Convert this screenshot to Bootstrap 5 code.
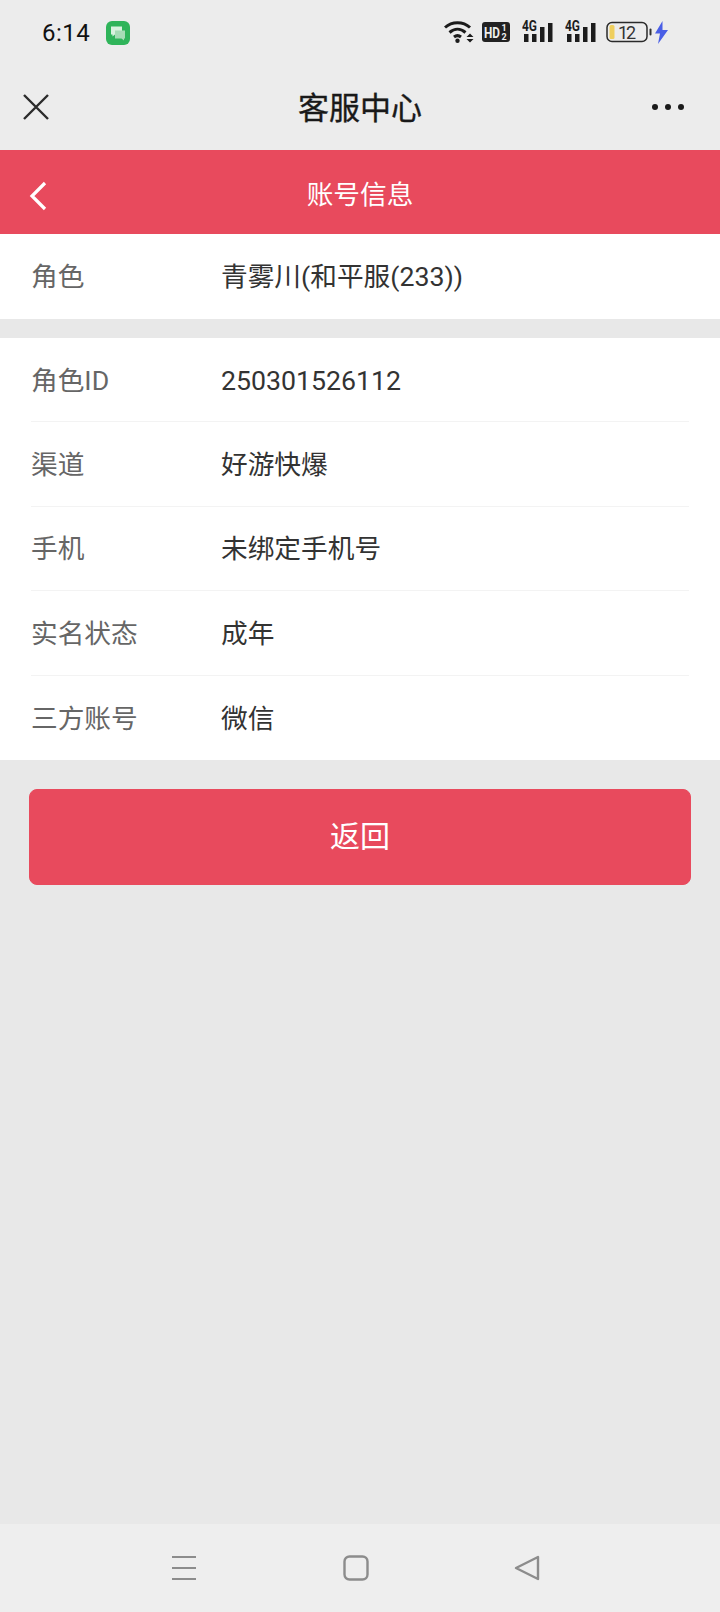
<!DOCTYPE html>
<html lang="zh-CN">
<head>
    <meta charset="UTF-8">
    <meta name="viewport" content="width=device-width, initial-scale=1.0">
    <title>客服中心</title>
    <link rel="stylesheet" href="https://cdn.jsdelivr.net/npm/bootstrap@5.3.3/dist/css/bootstrap.min.css">
    <style>
        html, body { height: 100%; }
        body {
            width: 720px;
            height: 1612px;
            overflow: hidden;
            background-color: #e8e8e8;
            font-family: Roboto, "Noto Sans CJK SC", sans-serif;
        }
        .phone-status { height: 62px; background-color: #ececec; padding: 3px 51px 0 42px; }
        .status-time { font-size: 24px; color: #111; line-height: 1; width: 64px; letter-spacing: .5px; }
        .status-icons { gap: 8px; margin-top: -2px; }
        .status-batt { margin-left: 2px; }
        .web-top { height: 88px; background-color: #ececec; padding: 2px 35px 0 22px; }
        .web-title { font-size: 31px; font-weight: 400; color: #191919; line-height: 1; margin-top: 2px; -webkit-text-stroke: .35px #191919; }
        .page-head { height: 84px; background-color: #e84a5d; color: #fff; padding: 8px 0 0 28px; }
        .page-title { font-size: 26.7px; line-height: 1; margin-top: 3px; }
        .info-block { background-color: #fff; padding: 0 31px; }
        .info-gap { margin-top: 19px; }
        .info-row { height: 84.4px; font-size: 26.7px; padding-top: 2px; border-bottom: 1px solid #f3f3f3; }
        .info-row:last-child { border-bottom: 0; }
        .info-row.info-single { height: 85px; }
        .info-label { width: 190px; color: #666; flex-shrink: 0; }
        .info-value { color: #333; }
        .btn-back {
            height: 96px;
            margin: 29px 29px 0;
            background-color: #e84a5d;
            border-color: #e84a5d;
            color: #fff;
            font-size: 30px;
            border-radius: 8px;
        }
        .btn-back:hover { background-color: #e84a5d; border-color: #e84a5d; color: #fff; }
        .soft-nav { height: 88px; background-color: #eeeeee; padding: 0 180px 0 171px; }
        .page-fill { height: 1612px; }
    </style>
</head>
<body>
    <div class="page-fill d-flex flex-column">
        <!-- Status bar -->
        <div class="phone-status d-flex align-items-center justify-content-between flex-shrink-0">
            <div class="d-flex align-items-center">
                <span class="status-time">6:14</span>
                <svg width="24" height="24" viewBox="0 0 24 24">
                    <rect width="24" height="24" rx="6" fill="#2fb45a"/>
                    <path d="M5 5.500h11v8H9L6.500 15.500v-2H5z" fill="#d9f2df"/>
                    <path d="M9 9.500h10v8h-1v2l-2.500-2H9z" fill="#a7dcb6"/>
                </svg>
            </div>
            <div class="status-icons d-flex align-items-center">
                <svg width="30" height="24" viewBox="0 0 30 24" fill="none" stroke="#1c1c1c" stroke-width="3">
                    <path d="M1 7.500C8 1 19 1 26 7.500"/>
                    <path d="M5.500 12.500c5-4.300 11-4.300 16 0"/>
                    <path d="M10 17c2.500-2 4.500-2 7 0"/>
                    <circle cx="13.500" cy="20.800" r="2.200" fill="#1c1c1c" stroke="none"/>
                    <path d="M22.500 17l3.500-3.500 3.500 3.500zM22.500 19l3.500 3.500 3.500-3.500z" fill="#1c1c1c" stroke="none"/>
                </svg>
                <svg width="28" height="20" viewBox="0 0 28 20">
                    <rect width="28" height="20" rx="3" fill="#222"/>
                    <text x="2" y="16" font-family="Roboto, sans-serif" font-size="15" font-weight="700" fill="#eee" textLength="16" lengthAdjust="spacingAndGlyphs">HD</text>
                    <text x="19.500" y="9" font-family="Roboto, sans-serif" font-size="9" font-weight="700" fill="#eee">1</text>
                    <text x="19.500" y="18" font-family="Roboto, sans-serif" font-size="9" font-weight="700" fill="#eee">2</text>
                </svg>
                <svg width="31" height="30" viewBox="0 -3 31 30" class="ms-1">
                    <text x="0" y="11" font-family="Roboto, sans-serif" font-size="14" font-weight="700" fill="#1c1c1c" textLength="15" lengthAdjust="spacingAndGlyphs">4G</text>
                    <rect x="2" y="14" width="4.500" height="8" fill="#1c1c1c"/>
                    <rect x="10" y="14" width="4.500" height="8" fill="#1c1c1c"/>
                    <rect x="18" y="7" width="4.500" height="15" fill="#1c1c1c"/>
                    <rect x="26" y="3" width="4.500" height="19" fill="#1c1c1c"/>
                </svg>
                <svg width="31" height="30" viewBox="0 -3 31 30" class="ms-1">
                    <text x="0" y="11" font-family="Roboto, sans-serif" font-size="14" font-weight="700" fill="#1c1c1c" textLength="15" lengthAdjust="spacingAndGlyphs">4G</text>
                    <rect x="2" y="14" width="4.500" height="8" fill="#1c1c1c"/>
                    <rect x="10" y="14" width="4.500" height="8" fill="#1c1c1c"/>
                    <rect x="18" y="7" width="4.500" height="15" fill="#1c1c1c"/>
                    <rect x="26" y="3" width="4.500" height="19" fill="#1c1c1c"/>
                </svg>
                <svg width="63" height="24" viewBox="0 0 63 24" class="status-batt">
                    <rect x="1" y="2.500" width="40" height="19" rx="5" fill="none" stroke="#2a2a2a" stroke-width="1.500"/>
                    <rect x="3.500" y="5" width="5" height="14" rx="1.500" fill="#efcf5e"/>
                    <text x="12" y="18.500" font-family="Roboto, sans-serif" font-size="18" fill="#333" textLength="18">12</text>
                    <rect x="43.500" y="8.500" width="2" height="7" rx="1" fill="#333"/>
                    <path d="M56.500 1L49 13.500h5L52 24l10-14h-5.500z" fill="#4a5fe6"/>
                </svg>
            </div>
        </div>

        <!-- WebView title bar -->
        <div class="web-top position-relative d-flex align-items-center justify-content-between flex-shrink-0">
            <svg width="28" height="28" viewBox="0 0 28 28" fill="none" stroke="#2b2b2b" stroke-width="2.400">
                <path d="M2 2l24 24M26 2L2 26"/>
            </svg>
            <span class="web-title position-absolute top-50 start-50 translate-middle">客服中心</span>
            <svg width="34" height="8" viewBox="0 0 34 8" fill="#1a1a1a">
                <circle cx="4" cy="4" r="3"/><circle cx="17" cy="4" r="3"/><circle cx="30" cy="4" r="3"/>
            </svg>
        </div>

        <!-- Page header -->
        <div class="page-head position-relative d-flex align-items-center flex-shrink-0">
            <svg width="20" height="30" viewBox="0 0 20 30" fill="none" stroke="#fff" stroke-width="3.200">
                <path d="M17 2L4 15l13 13"/>
            </svg>
            <span class="page-title position-absolute top-50 start-50 translate-middle">账号信息</span>
        </div>

        <!-- Info rows -->
        <div class="info-block flex-shrink-0">
            <div class="info-row info-single d-flex align-items-center">
                <div class="info-label">角色</div>
                <div class="info-value">青雾川(和平服(233))</div>
            </div>
        </div>
        <div class="info-block info-gap flex-shrink-0">
            <div class="info-row d-flex align-items-center">
                <div class="info-label">角色ID</div>
                <div class="info-value">250301526112</div>
            </div>
            <div class="info-row d-flex align-items-center">
                <div class="info-label">渠道</div>
                <div class="info-value">好游快爆</div>
            </div>
            <div class="info-row d-flex align-items-center">
                <div class="info-label">手机</div>
                <div class="info-value">未绑定手机号</div>
            </div>
            <div class="info-row d-flex align-items-center">
                <div class="info-label">实名状态</div>
                <div class="info-value">成年</div>
            </div>
            <div class="info-row d-flex align-items-center">
                <div class="info-label">三方账号</div>
                <div class="info-value">微信</div>
            </div>
        </div>

        <button type="button" class="btn btn-back flex-shrink-0">返回</button>

        <!-- Android nav bar -->
        <div class="soft-nav mt-auto d-flex align-items-center justify-content-between flex-shrink-0">
            <svg width="26" height="26" viewBox="0 0 26 26" stroke="#8c8c8c" stroke-width="2">
                <path d="M1 2h24M1 13h24M1 24h24"/>
            </svg>
            <svg width="26" height="26" viewBox="0 0 26 26" fill="none" stroke="#8c8c8c" stroke-width="2.400">
                <rect x="1.500" y="1.500" width="23" height="23" rx="5"/>
            </svg>
            <svg width="26" height="26" viewBox="0 0 26 26" fill="none" stroke="#8c8c8c" stroke-width="2.400" stroke-linejoin="round">
                <path d="M24 2v22L2 13z"/>
            </svg>
        </div>
    </div>

    <script src="https://cdn.jsdelivr.net/npm/bootstrap@5.3.3/dist/js/bootstrap.bundle.min.js"></script>
</body>
</html>
